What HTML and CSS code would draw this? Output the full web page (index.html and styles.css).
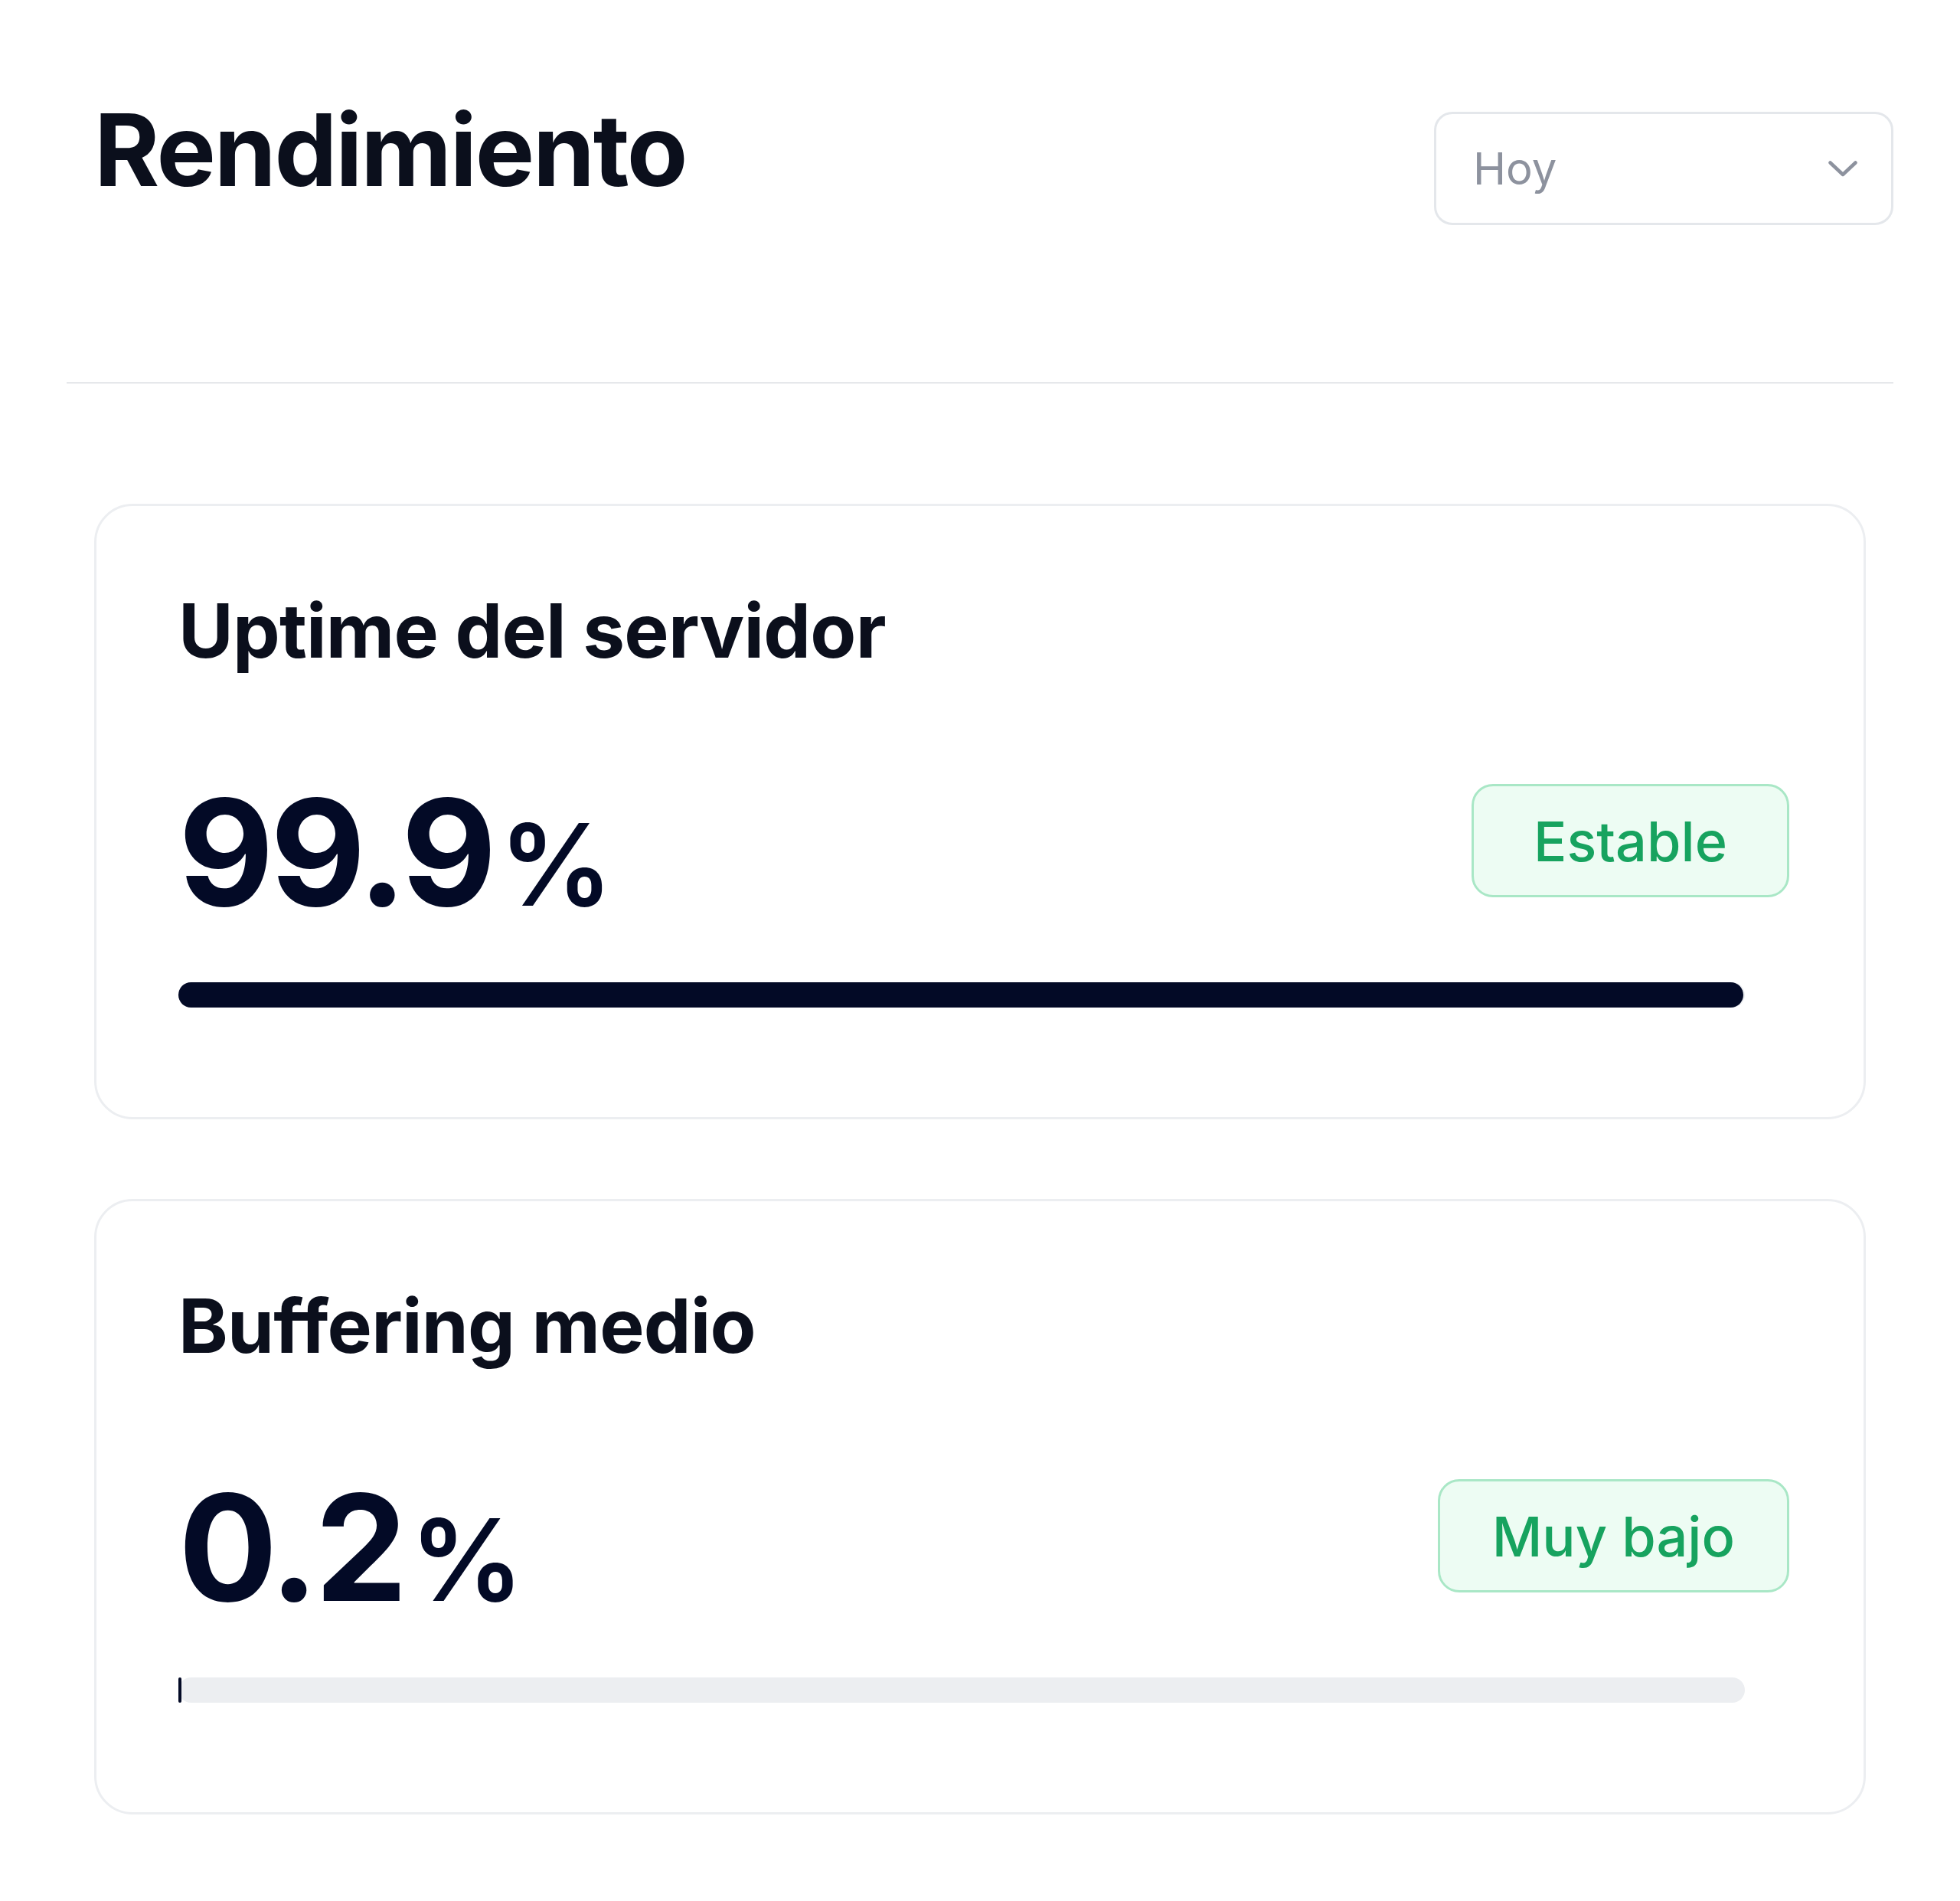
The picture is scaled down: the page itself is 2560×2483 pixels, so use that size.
FILE: index.html
```html
<!DOCTYPE html>
<html lang="es">
<head>
  <meta charset="UTF-8">
  <meta name="viewport" content="width=device-width, initial-scale=1.0">
  <title>Rendimiento</title>
  <link rel="stylesheet" href="styles.css">
</head>
<body>
  <div class="header">
    <h1 class="title">Rendimiento</h1>
    <div class="select">
      <span>Hoy</span>
      <svg class="chevron" width="40" height="22" viewBox="0 0 40 22" fill="none">
        <path d="M3.5 3.5 L20 19 L36.5 3.5" stroke="#8d929e" stroke-width="4.5" stroke-linecap="round" stroke-linejoin="round"/>
      </svg>
    </div>
  </div>

  <div class="cards">
    <div class="card">
      <h2 class="card-title">Uptime del servidor</h2>
      <div class="card-row">
        <div class="value"><span class="num">99.9</span><span class="unit">%</span></div>
        <span class="badge">Estable</span>
      </div>
      <div class="bar"><div class="bar-fill" style="width: 99.9%"></div></div>
    </div>

    <div class="card">
      <h2 class="card-title">Buffering medio</h2>
      <div class="card-row">
        <div class="value"><span class="num">0.2</span><span class="unit">%</span></div>
        <span class="badge">Muy bajo</span>
      </div>
      <div class="bar"><div class="bar-fill" style="width: 0.2%"></div></div>
    </div>
  </div>
</body>
</html>
```

FILE: styles.css
```css
* {
  margin: 0;
  padding: 0;
  box-sizing: border-box;
}
body {
  font-family: Inter, "Noto Sans", sans-serif;
  background: #fff;
  color: #0b0f1c;
}

/* cabecera */
.header {
  display: flex;
  justify-content: space-between;
  align-items: flex-start;
  height: 501px;
  margin: 0 87px;
  padding: 118px 0 0 36px;
  border-bottom: 2px solid #e6e8eb;
}
.title {
  font-size: 130px;
  line-height: 156px;
  font-weight: 700;
  letter-spacing: -0.017em;
}
.select {
  display: flex;
  justify-content: space-between;
  align-items: center;
  width: 600px;
  height: 148px;
  margin-top: 28px;
  padding: 0 43px 0 48px;
  border: 3px solid #e4e7eb;
  border-radius: 24px;
  font-size: 58px;
  color: #8d929e;
}

/* tarjetas */
.cards {
  display: flex;
  flex-direction: column;
  gap: 104px;
  padding: 157px 123px 0;
}
.card {
  padding: 104px 97px 143px 107px;
  border: 3px solid #eceef1;
  border-radius: 50px;
}
.card-title {
  font-size: 98px;
  line-height: 118px;
  font-weight: 700;
  letter-spacing: -0.008em;
}
.card-row {
  display: flex;
  justify-content: space-between;
  align-items: flex-start;
  margin-top: 134px;
}
.value {
  display: flex;
  align-items: baseline;
  color: #030a26;
}
.num {
  font-size: 192px;
  line-height: 192px;
  font-weight: 700;
  letter-spacing: -0.025em;
}
.unit {
  margin-left: 8px;
  font-size: 148px;
  line-height: 1;
  font-weight: 600;
}
.badge {
  display: flex;
  justify-content: center;
  align-items: center;
  min-width: 415px;
  height: 148px;
  margin-top: 7px;
  padding: 0 68px;
  border: 3px solid #a9e7c6;
  border-radius: 28px;
  background: #edfcf3;
  color: #17a35f;
  font-size: 72px;
  font-weight: 500;
}
.bar {
  width: 2046px;
  height: 33px;
  margin-top: 74px;
  border-radius: 999px;
  background: #eceef1;
}
.bar-fill {
  height: 100%;
  border-radius: 999px;
  background: #030a26;
}
```
